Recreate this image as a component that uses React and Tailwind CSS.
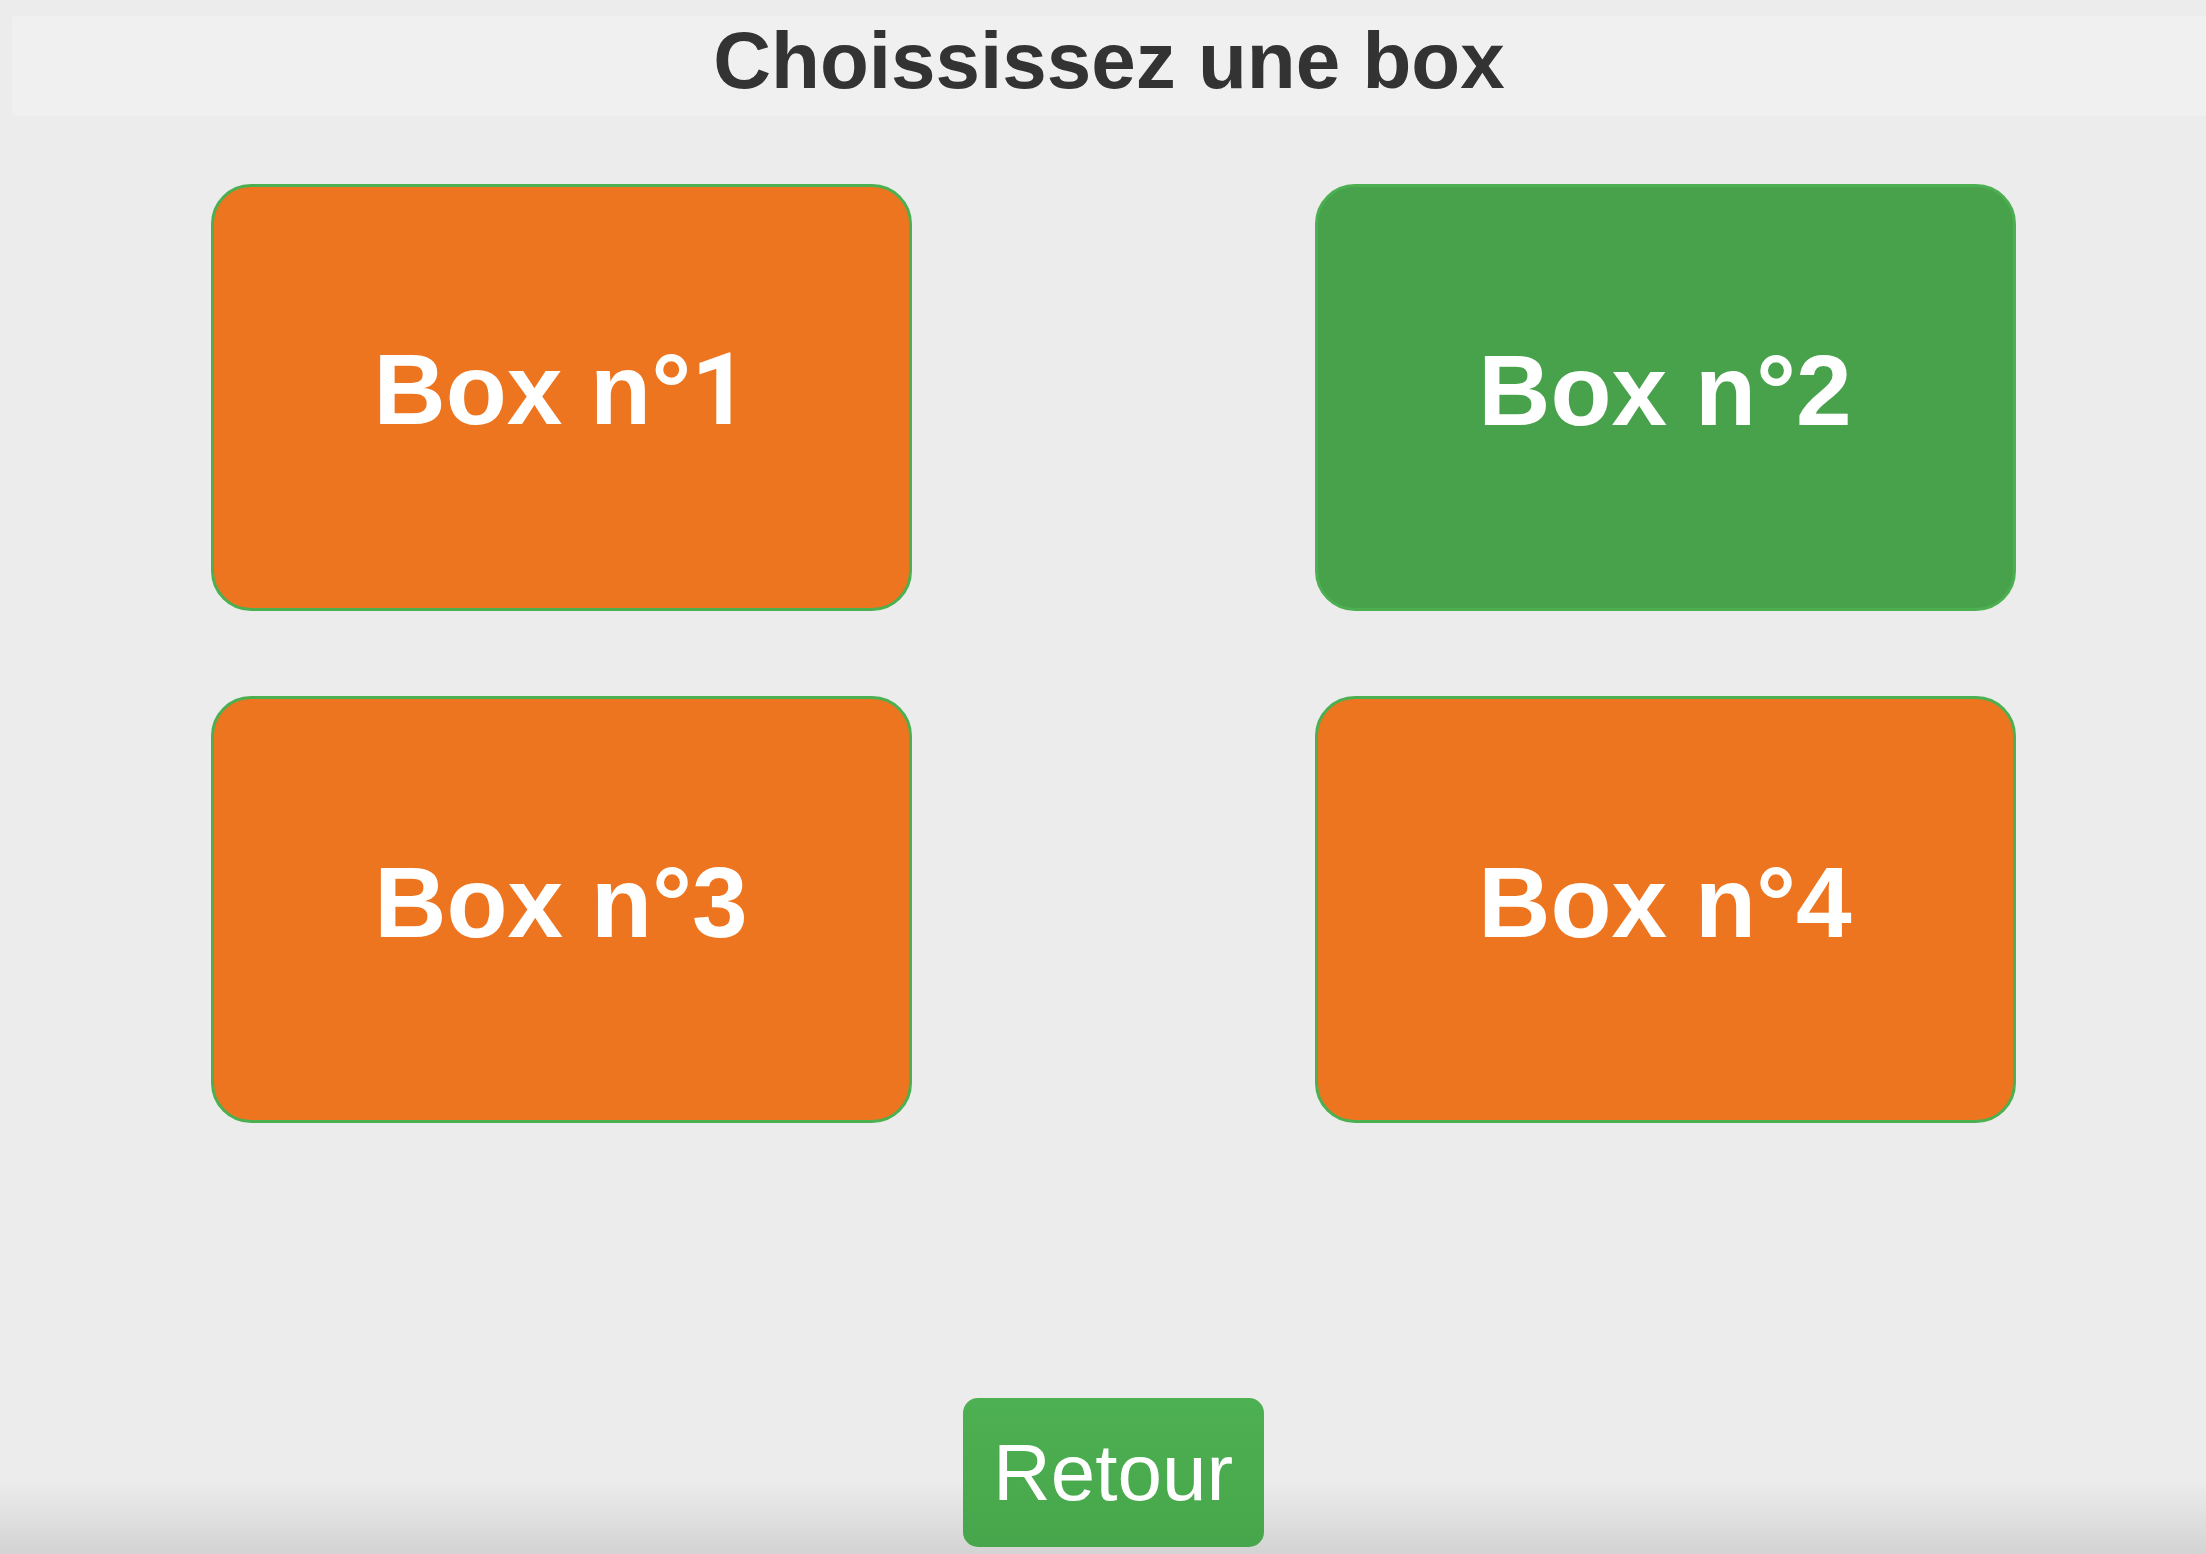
const boxes = [
  { id: 1, selected: false },
  { id: 2, selected: true },
  { id: 3, selected: false },
  { id: 4, selected: false },
];

function BoxCard({ box }) {
  return (
    <button
      className={
        "h-[427px] w-[701px] rounded-[40px] border-[3px] border-[#4caf50] flex items-center justify-center pb-[16px] " +
        (box.selected ? "bg-[#48a24b]" : "bg-[#ee751f]")
      }
    >
      <span className="text-white font-bold text-[100px] leading-none">
        Box n°
        {box.id === 1 ? (
          <span style={{ fontFamily: "Roboto, sans-serif" }}>1</span>
        ) : (
          box.id
        )}
      </span>
    </button>
  );
}

export default function App() {
  return (
    <div
      className="min-h-screen bg-[#ececec] flex flex-col pl-[12px]"
      style={{ fontFamily: '"Liberation Sans", Arial, Helvetica, sans-serif' }}
    >
      <div className="mt-[16px] h-[100px] bg-[#f0f0f0] rounded-l-[4px] pt-[5px] flex justify-center">
        <h1 className="text-[80px] leading-none font-bold text-[#333333]">
          Choississez une box
        </h1>
      </div>

      <div className="pl-[8px] mt-[68px] flex justify-center">
        <div className="grid grid-cols-[701px_701px] gap-x-[403px] gap-y-[85px]">
          {boxes.map((box) => (
            <BoxCard key={box.id} box={box} />
          ))}
        </div>
      </div>

      <div className="flex-1" />

      <div className="-ml-[12px] h-[174px] pt-[18px] pb-[7px] flex justify-center pl-[20px] bg-[linear-gradient(to_bottom,#ececec_0%,#ececec_58%,#d3d3d3_100%)]">
        <button className="h-[149px] w-[301px] rounded-[15px] bg-gradient-to-b from-[#4db052] to-[#47a64b] text-white text-[80px] leading-none flex items-center justify-center">
          Retour
        </button>
      </div>
    </div>
  );
}
